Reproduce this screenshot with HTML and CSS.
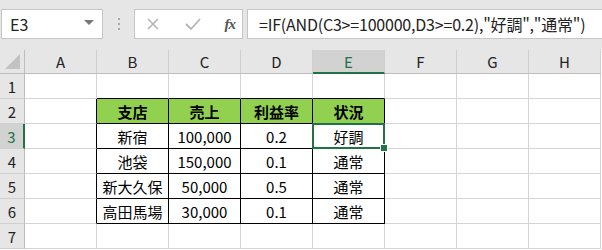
FILE: index.html
```html
<!DOCTYPE html>
<html lang="ja">
<head>
  <meta charset="utf-8">
  <title>Excel - IF AND</title>
  <link rel="stylesheet" href="styles.css">
</head>
<body>
  <div class="toolbar">
    <div class="namebox">
      <span>E3</span>
      <span class="drop"></span>
    </div>
    <div class="dots"><i></i><i></i><i></i></div>
    <div class="fbtns">
      <svg width="16" height="16" viewBox="0 0 16 16"><path d="M3 3 L13 13 M13 3 L3 13" stroke="#b4b4b4" stroke-width="1.6" fill="none"/></svg>
      <svg width="18" height="16" viewBox="0 0 18 16"><path d="M2 8 L7 13 L16 3" stroke="#b4b4b4" stroke-width="1.8" fill="none"/></svg>
      <span class="fx">fx</span>
    </div>
    <div class="formula">=IF(AND(C3&gt;=100000,D3&gt;=0.2),"好調","通常")</div>
  </div>

  <div class="sheet">
    <div class="corner"><span class="tri"></span></div>
    <div class="colhead">A</div>
    <div class="colhead">B</div>
    <div class="colhead">C</div>
    <div class="colhead">D</div>
    <div class="colhead sel">E</div>
    <div class="colhead">F</div>
    <div class="colhead">G</div>
    <div class="colhead">H</div>

    <div class="rowhead">1</div>
    <div class="cell"></div>
    <div class="cell top"></div>
    <div class="cell top"></div>
    <div class="cell top"></div>
    <div class="cell top"></div>
    <div class="cell"></div>
    <div class="cell"></div>
    <div class="cell"></div>

    <div class="rowhead">2</div>
    <div class="cell left"></div>
    <div class="cell tb th">支店</div>
    <div class="cell tb th">売上</div>
    <div class="cell tb th">利益率</div>
    <div class="cell tb th">状況</div>
    <div class="cell"></div>
    <div class="cell"></div>
    <div class="cell"></div>

    <div class="rowhead sel">3</div>
    <div class="cell left"></div>
    <div class="cell tb">新宿</div>
    <div class="cell tb">100,000</div>
    <div class="cell tb">0.2</div>
    <div class="cell tb active">好調</div>
    <div class="cell"></div>
    <div class="cell"></div>
    <div class="cell"></div>

    <div class="rowhead">4</div>
    <div class="cell left"></div>
    <div class="cell tb">池袋</div>
    <div class="cell tb">150,000</div>
    <div class="cell tb">0.1</div>
    <div class="cell tb">通常</div>
    <div class="cell"></div>
    <div class="cell"></div>
    <div class="cell"></div>

    <div class="rowhead">5</div>
    <div class="cell left"></div>
    <div class="cell tb">新大久保</div>
    <div class="cell tb">50,000</div>
    <div class="cell tb">0.5</div>
    <div class="cell tb">通常</div>
    <div class="cell"></div>
    <div class="cell"></div>
    <div class="cell"></div>

    <div class="rowhead">6</div>
    <div class="cell left"></div>
    <div class="cell tb">高田馬場</div>
    <div class="cell tb">30,000</div>
    <div class="cell tb">0.1</div>
    <div class="cell tb">通常</div>
    <div class="cell"></div>
    <div class="cell"></div>
    <div class="cell"></div>

    <div class="rowhead">7</div>
    <div class="cell"></div>
    <div class="cell"></div>
    <div class="cell"></div>
    <div class="cell"></div>
    <div class="cell"></div>
    <div class="cell"></div>
    <div class="cell"></div>
    <div class="cell"></div>
  </div>
</body>
</html>
```

FILE: styles.css
```css
* {
  margin: 0;
  padding: 0;
  box-sizing: border-box;
}

body {
  font-family: "Noto Sans CJK JP", "Noto Sans", sans-serif;
  background: #fff;
  color: #000;
  overflow: hidden;
}

/* formula bar */
.toolbar {
  display: flex;
  align-items: center;
  height: 50px;
  padding: 9px 0 11px 1px;
  background: #e6e6e6;
}

.namebox, .fbtns, .formula {
  height: 30px;
  background: #fff;
  border: 1px solid #c6c6c6;
  display: flex;
  align-items: center;
}

.namebox {
  width: 102px;
  padding: 0 8px;
  justify-content: space-between;
  font-size: 16px;
  color: #222;
}

.drop {
  width: 0;
  height: 0;
  border-left: 5px solid transparent;
  border-right: 5px solid transparent;
  border-top: 5px solid #777;
  margin-top: -3px;
}

.dots {
  width: 31px;
  display: flex;
  flex-direction: column;
  align-items: center;
  gap: 3px;
}

.dots i {
  width: 2px;
  height: 2px;
  background: #aaa;
}

.fbtns {
  width: 109px;
  padding: 0 7px 0 10px;
  justify-content: space-between;
}

.fx {
  font-family: "Liberation Serif", serif;
  font-style: italic;
  font-weight: bold;
  font-size: 15px;
  color: #555;
  letter-spacing: -1px;
}

.formula {
  flex: 1;
  margin-left: 4px;
  border-right: none;
  padding-left: 11px;
  font-size: 16px;
  color: #222;
  white-space: nowrap;
  letter-spacing: -0.2px;
}

/* sheet grid */
.sheet {
  display: grid;
  grid-template-columns: 25px repeat(8, 72px);
  grid-template-rows: 24px repeat(7, 25px);
  font-size: 15px;
}

.corner {
  background: #e6e6e6;
  border-right: 1px solid #bdbdbd;
  border-bottom: 1px solid #bdbdbd;
  position: relative;
}

.tri {
  position: absolute;
  right: 4px;
  bottom: 4px;
  width: 0;
  height: 0;
  border-left: 15px solid transparent;
  border-bottom: 15px solid #c2c2c2;
}

.colhead, .rowhead {
  background: #e6e6e6;
  display: flex;
  align-items: center;
  justify-content: center;
  color: #222;
  font-size: 15px;
}

.colhead {
  border-right: 1px solid #cfcfcf;
  border-bottom: 1px solid #bdbdbd;
}

.rowhead {
  border-right: 1px solid #bdbdbd;
  border-bottom: 1px solid #cfcfcf;
}

.colhead.sel {
  background: #d2d2d2;
  color: #217346;
  border-bottom: 2px solid #217346;
}

.rowhead.sel {
  background: #d2d2d2;
  color: #217346;
  border-right: 2px solid #217346;
}

.cell {
  border-right: 1px solid #d4d4d4;
  border-bottom: 1px solid #d4d4d4;
  display: flex;
  align-items: center;
  justify-content: center;
  white-space: nowrap;
}

.cell.top {
  border-bottom-color: #000;
}

.cell.left {
  border-right-color: #000;
}

.cell.tb {
  border-right-color: #000;
  border-bottom-color: #000;
}

.cell.th {
  background: #92d050;
  font-weight: bold;
}

.cell.active {
  position: relative;
}

.cell.active::after {
  content: "";
  position: absolute;
  left: -1px;
  top: -1px;
  right: -1px;
  bottom: -1px;
  border: 2px solid #217346;
}

.cell.active::before {
  content: "";
  position: absolute;
  right: -4px;
  bottom: -4px;
  width: 6px;
  height: 6px;
  background: #217346;
  border: 1px solid #fff;
  z-index: 1;
}
```
